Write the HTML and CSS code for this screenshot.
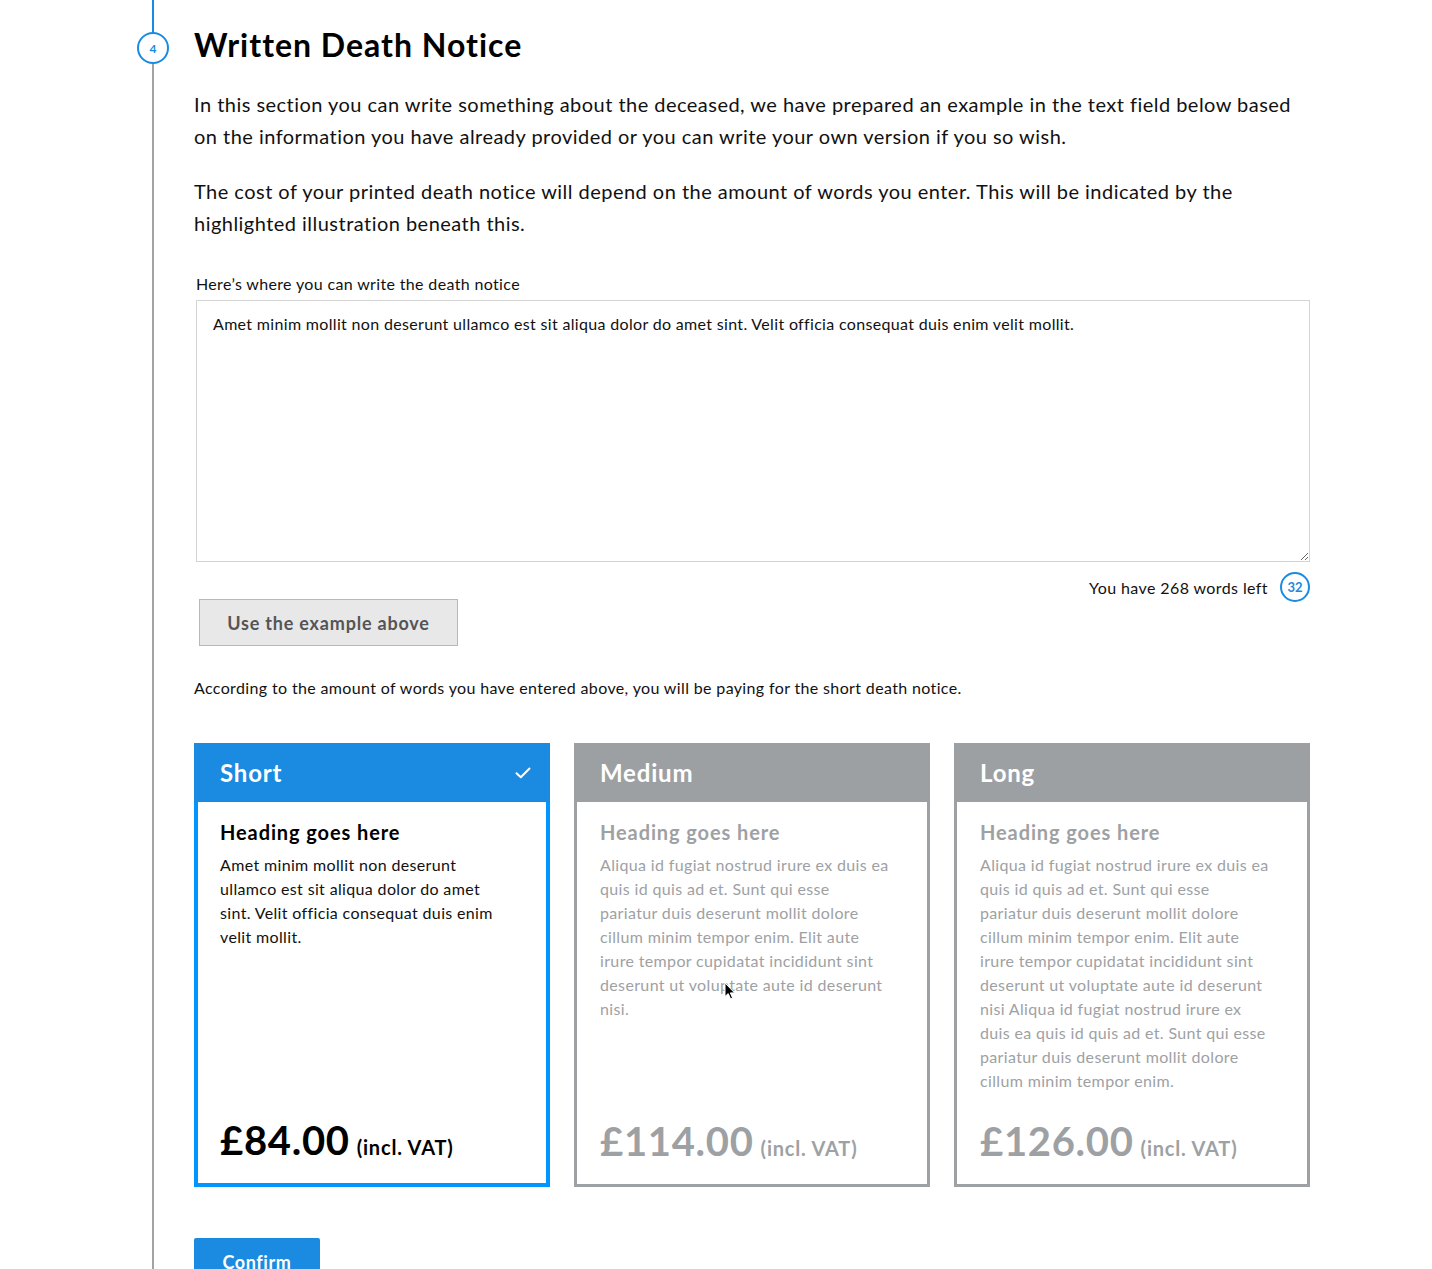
FILE: index.html
```html
<!DOCTYPE html>
<html lang="en">
<head>
<meta charset="utf-8">
<title>Written Death Notice</title>
<link rel="stylesheet" href="styles.css">
</head>
<body>
<div class="page">
  <section class="step">
    <span class="step-rail-active"></span>
    <span class="step-num">4</span>
    <h1 class="step-title">Written Death Notice</h1>
    <p class="intro">In this section you can write something about the deceased, we have prepared an example in the text field below based on the information you have already provided or you can write your own version if you so wish.</p>
    <p class="intro">The cost of your printed death notice will depend on the amount of words you enter. This will be indicated by the highlighted illustration beneath this.</p>

    <label class="field-label" for="notice">Here’s where you can write the death notice</label>
    <textarea id="notice" class="notice-input">Amet minim mollit non deserunt ullamco est sit aliqua dolor do amet sint. Velit officia consequat duis enim velit mollit.</textarea>
    <div class="counter">
      <span>You have 268 words left</span>
      <span class="counter-badge">32</span>
    </div>

    <button class="btn-secondary" type="button">Use the example above</button>

    <p class="paying">According to the amount of words you have entered above, you will be paying for the short death notice.</p>

    <div class="cards">
      <div class="card card-active">
        <div class="card-head">
          <span>Short</span>
          <svg class="check" width="16" height="12" viewBox="0 0 16 12"><path d="M1.5 6.2 L5.8 10.2 L14.5 1.5" fill="none" stroke="#fff" stroke-width="2" stroke-linecap="round" stroke-linejoin="round"/></svg>
        </div>
        <div class="card-body">
          <h2 class="card-heading">Heading goes here</h2>
          <p class="card-text">Amet minim mollit non deserunt ullamco est sit aliqua dolor do amet sint. Velit officia consequat duis enim velit mollit.</p>
          <div class="price"><span class="amount">£84.00</span> <span class="vat">(incl. VAT)</span></div>
        </div>
      </div>
      <div class="card">
        <div class="card-head"><span>Medium</span></div>
        <div class="card-body">
          <h2 class="card-heading">Heading goes here</h2>
          <p class="card-text">Aliqua id fugiat nostrud irure ex duis ea quis id quis ad et. Sunt qui esse pariatur duis deserunt mollit dolore cillum minim tempor enim. Elit aute irure tempor cupidatat incididunt sint deserunt ut voluptate aute id deserunt nisi.</p>
          <div class="price"><span class="amount">£114.00</span> <span class="vat">(incl. VAT)</span></div>
        </div>
      </div>
      <div class="card">
        <div class="card-head"><span>Long</span></div>
        <div class="card-body">
          <h2 class="card-heading">Heading goes here</h2>
          <p class="card-text">Aliqua id fugiat nostrud irure ex duis ea quis id quis ad et. Sunt qui esse pariatur duis deserunt mollit dolore cillum minim tempor enim. Elit aute irure tempor cupidatat incididunt sint deserunt ut voluptate aute id deserunt nisi Aliqua id fugiat nostrud irure ex duis ea quis id quis ad et. Sunt qui esse pariatur duis deserunt mollit dolore cillum minim tempor enim.</p>
          <div class="price"><span class="amount">£126.00</span> <span class="vat">(incl. VAT)</span></div>
        </div>
      </div>
      <svg class="cursor" width="12" height="18" viewBox="0 0 12 18"><path d="M1 1 L1 14.5 L4.2 11.6 L6.6 16.8 L8.6 15.9 L6.3 10.9 L10.6 10.9 Z" fill="#000" stroke="#fff" stroke-width="1" stroke-linejoin="round"/></svg>
    </div>

    <button class="btn-primary" type="button">Confirm</button>
  </section>
</div>
</body>
</html>
```

FILE: styles.css
```css
html, body {
  margin: 0;
  padding: 0;
  background: #fff;
}
body {
  font-family: "Lato", "Open Sans", sans-serif;
  color: #111;
  overflow: hidden;
  height: 1269px;
}
.page {
  padding-left: 152px;
  height: 1269px;
}
.step {
  position: relative;
  border-left: 2px solid #a3a3a3;
  padding-left: 40px;
  width: 1116px;
  height: 1269px;
  box-sizing: content-box;
}
.step-rail-active {
  position: absolute;
  left: -2px;
  top: 0;
  width: 2px;
  height: 33px;
  background: #1a8be0;
}
.step-num {
  position: absolute;
  left: -17px;
  top: 32px;
  width: 28px;
  height: 28px;
  border: 2px solid #1a8be0;
  border-radius: 50%;
  background: #fff;
  color: #1a8be0;
  font-size: 12px;
  font-weight: 700;
  display: flex;
  align-items: center;
  justify-content: center;
}
.step-title {
  margin: 0;
  padding-top: 25px;
  font-size: 32px;
  line-height: 40px;
  font-weight: 700;
  color: #000;
  letter-spacing: 1px;
}
.intro {
  margin: 23px 0 0;
  font-size: 20px;
  line-height: 32px;
  color: #111;
  letter-spacing: 0.47px;
}
.intro + .intro {
  margin-top: 23px;
}
.field-label {
  display: block;
  margin: 34px 0 0 2px;
  font-size: 16px;
  line-height: 22px;
  color: #111;
  letter-spacing: 0.35px;
}
.notice-input {
  display: block;
  box-sizing: border-box;
  margin: 5px 0 0 2px;
  width: 1114px;
  height: 262px;
  padding: 12px 16px;
  border: 1px solid #d4d4d4;
  font-family: inherit;
  font-size: 16px;
  line-height: 22px;
  color: #111;
  letter-spacing: 0.33px;
  resize: vertical;
  outline: none;
}
.counter {
  display: flex;
  justify-content: flex-end;
  align-items: center;
  gap: 12px;
  margin-top: 10px;
  font-size: 16px;
  color: #111;
  letter-spacing: 0.4px;
}
.counter-badge {
  width: 26px;
  height: 26px;
  border: 2px solid #1a8be0;
  border-radius: 50%;
  color: #1a8be0;
  font-size: 13px;
  font-weight: 700;
  letter-spacing: 0;
  display: flex;
  align-items: center;
  justify-content: center;
}
.btn-secondary {
  display: block;
  margin: -3px 0 0 5px;
  width: 259px;
  height: 47px;
  background: #e8e8e9;
  border: 1px solid #b8b8b8;
  font-family: inherit;
  font-size: 18px;
  font-weight: 700;
  color: #555;
  letter-spacing: 0.8px;
}
.paying {
  margin: 31px 0 0;
  font-size: 16px;
  line-height: 22px;
  color: #111;
  letter-spacing: 0.36px;
}
.cards {
  position: relative;
  display: grid;
  grid-template-columns: repeat(3, 356px);
  gap: 24px;
  margin-top: 44px;
}
.cursor {
  position: absolute;
  left: 530px;
  top: 239px;
}
.card {
  box-sizing: border-box;
  height: 444px;
  border: 3px solid #9ea1a4;
  border-top: 0;
  display: flex;
  flex-direction: column;
  color: #9ea1a4;
}
.card-head {
  height: 59px;
  margin: 0 -3px;
  background: #9da0a3;
  color: #fff;
  display: flex;
  align-items: center;
  justify-content: space-between;
  padding: 0 26px;
  font-size: 24px;
  font-weight: 700;
  letter-spacing: 0.8px;
}
.card-body {
  flex: 1;
  display: flex;
  flex-direction: column;
  padding: 16px 23px 0;
}
.card-heading {
  margin: 0;
  font-size: 20px;
  line-height: 28px;
  font-weight: 700;
  letter-spacing: 0.9px;
}
.card-text {
  margin: 7px 0 0;
  width: 290px;
  font-size: 16px;
  line-height: 24px;
  letter-spacing: 0.35px;
}
.price {
  margin-top: auto;
  height: 63px;
  display: flex;
  align-items: baseline;
  gap: 7px;
}
.amount {
  font-size: 40px;
  font-weight: 700;
  line-height: 40px;
  letter-spacing: 0.7px;
}
.vat {
  font-size: 20px;
  font-weight: 700;
  letter-spacing: 0.8px;
}
.card-active {
  border-color: #0095ff;
  border-width: 4px;
  border-top: 0;
  color: #000;
}
.card-active .card-head {
  margin: 0 -4px;
  background: #1a8be0;
  padding: 0 19px 0 26px;
}
.card-active .card-body {
  padding-left: 22px;
}
.card-active .card-text {
  color: #111;
}
.btn-primary {
  display: block;
  margin-top: 51px;
  width: 126px;
  height: 48px;
  padding: 0;
  background: #1a8be0;
  border: 0;
  border-radius: 2px 2px 0 0;
  color: #fff;
  font-family: inherit;
  font-size: 18px;
  font-weight: 700;
  letter-spacing: 0.6px;
}
```
